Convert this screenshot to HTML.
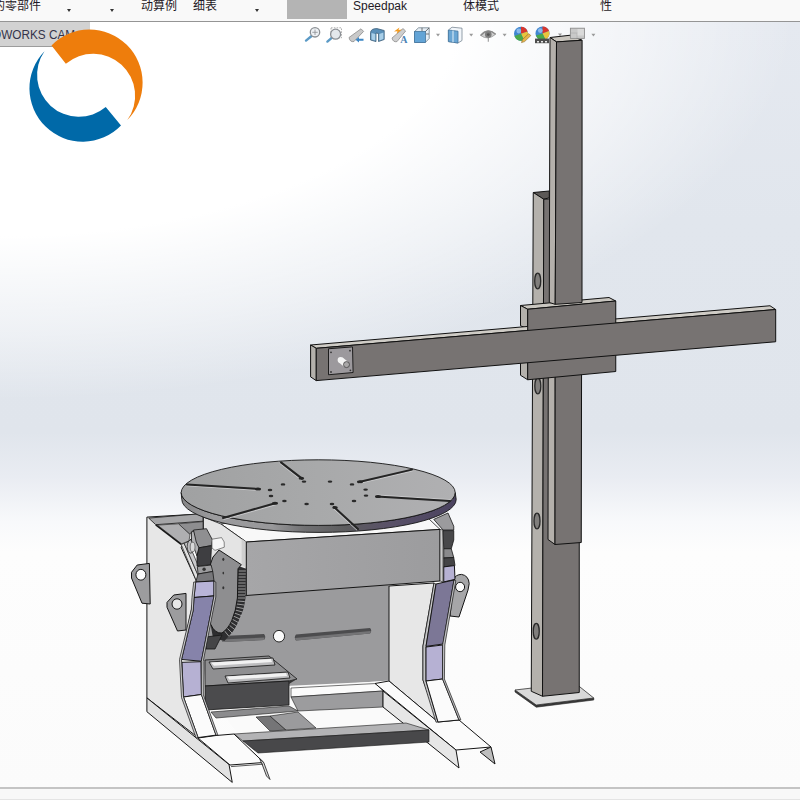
<!DOCTYPE html>
<html><head><meta charset="utf-8">
<style>
html,body{margin:0;padding:0;}
body{width:800px;height:800px;overflow:hidden;position:relative;background:#fff;font-family:"Liberation Sans","Noto Sans CJK SC",sans-serif;}
#vp{position:absolute;left:0;top:22px;width:800px;height:766px;
 background:
  radial-gradient(ellipse 820px 400px at 0px -10px, rgba(255,255,255,1) 0%, rgba(255,255,255,1) 56%, rgba(255,255,255,0.5) 78%, rgba(255,255,255,0) 97%),
  linear-gradient(180deg,#e5e9f0 0px,#e1e6ed 200px,#e0e5ec 410px,#e9ecf2 455px,#f8f9fb 500px,#fdfdfd 530px,#fbfbfb 766px);}
#top{position:absolute;left:0;top:0;width:800px;height:21px;background:#f9f9f9;border-bottom:1px solid #959595;overflow:hidden;}
#top span{position:absolute;top:-2.5px;font-size:12px;line-height:16px;color:#1f1a26;white-space:nowrap;}
#top i{position:absolute;top:8.5px;width:0;height:0;border-left:2.5px solid transparent;border-right:2.5px solid transparent;border-top:3px solid #333;}
#tab{position:absolute;left:0;top:22px;width:90px;height:24px;background:#d2d2d2;border-bottom:1px solid #9c9c9c;overflow:hidden;}
#tab span{position:absolute;left:-8px;top:3.5px;font-size:13.7px;line-height:18px;color:#34344a;white-space:nowrap;transform:scaleX(0.86);transform-origin:0 0;}
#bot{position:absolute;left:0;top:787px;width:800px;height:10px;background:#f8f8f8;border-top:2px solid #c4c4c4;border-bottom:1px solid #e4e4e4;}
svg{position:absolute;left:0;top:0;}
</style></head><body>
<div id="vp"></div>
<div id="top">
<span style="left:-7px">的零部件</span><i style="left:67px"></i><i style="left:110px"></i>
<span style="left:141px">动算例</span><span style="left:193px">细表</span><i style="left:255px"></i>
<div style="position:absolute;left:287px;top:0;width:60px;height:19px;background:#b4b4b4"></div>
<span style="left:353px;font-size:12px">Speedpak</span><span style="left:463px">体模式</span><span style="left:600px">性</span>
</div>
<div id="tab"><span>OWORKS CAM</span></div>
<div id="bot"></div>
<svg width="800" height="800" viewBox="0 0 800 800">
<!-- LOGO -->
<g id="logo">
<path d="M51.5 45.4 A53 53 0 0 1 127.3 120.1 A42 42 0 0 0 65.85 63.75 Z" fill="#ee7d0c"/>
<path d="M44.5 51.2 A53.3 53.3 0 0 0 121 125.5 L105.75 107 A41.8 41.8 0 0 1 44.5 51.2 Z" fill="#0069a8"/>
</g>
<!--ICONS-START-->
<g id="icons">
<!-- mag 1 -->
<line x1="311.6" y1="36" x2="306" y2="40.6" stroke="#5b9ac6" stroke-width="2.4" stroke-linecap="round"/>
<circle cx="315" cy="32.3" r="4.7" fill="#eef1f4" stroke="#8b8f94" stroke-width="1.3"/>
<path d="M315 29.6 V35 M312.3 32.3 H317.7" stroke="#8a8e92" stroke-width="0.8"/>
<!-- mag 2 -->
<rect x="331" y="27.8" width="10.5" height="10" fill="none" stroke="#9a9a9a" stroke-width="0.8" stroke-dasharray="1.6 1.2"/>
<line x1="332" y1="37.6" x2="327.4" y2="41.6" stroke="#5b9ac6" stroke-width="2.4" stroke-linecap="round"/>
<circle cx="335.6" cy="34.2" r="5" fill="#e4e8ec" stroke="#8b8f94" stroke-width="1.3"/>
<!-- previous view -->
<path d="M349 37.5 L361 28.8 L363.6 31.4 L354 41.5 Q350 42.5 349 37.5 Z" fill="#c9c9c9" stroke="#8d8d8d" stroke-width="0.8"/>
<path d="M355.5 39.8 L359 37 L359 38.8 L363.5 38.8 L363.5 40.8 L359 40.8 L359 42.6 Z" fill="#3d86c4"/>
<!-- section view -->
<path d="M370.5 32.5 Q371 28.5 377 28.6 L384.2 30.5 L384.2 39.5 L378.5 41.5 L378.5 33.5 L376 33 L376 41.6 L370.5 40 Z" fill="#5a8fb8" stroke="#3d5f7a" stroke-width="0.8"/>
<path d="M371.5 33 L375.3 34 L375.3 40.5 L371.5 39.5 Z M379.3 34 L383.4 32.5 L383.4 39 L379.3 40.4 Z" fill="#a9cfe8"/>
<!-- annotation -->
<path d="M392 38 L403 28.6 L405.6 31 L397 41.6 Q393 42.5 392 38 Z" fill="#cfcfcf" stroke="#8d8d8d" stroke-width="0.8"/>
<path d="M394 31.5 L399.5 27.5 L398.5 30 L402 29.5 L396.5 33.8 L397.5 31.3 Z" fill="#f39a1e"/>
<text x="400.2" y="42.8" font-family="Liberation Serif,serif" font-size="10" fill="#4a83b5" font-weight="bold">A</text>
<!-- view cube -->
<path d="M414.6 31.5 L418.5 27.8 L429.2 27.8 L429.2 38.5 L425.4 42.4 L414.6 42.4 Z" fill="#e6eef5" stroke="#6f7f8c" stroke-width="0.8"/>
<rect x="414.6" y="31.5" width="10.8" height="10.9" fill="#63a4d6" stroke="#41759f" stroke-width="0.8"/>
<path d="M425.4 31.5 L429.2 27.8 M422 27.8 V31 M429 34 H426" stroke="#555" stroke-width="0.8" fill="none"/>
<path d="M436 33.8 h4 l-2 2.6 z" fill="#9a9a9a"/>
<!-- display style -->
<path d="M448.4 30 L452 27.2 L462 28.2 L462 40.5 L458 43 L448.4 41.6 Z" fill="#f2f6fa" stroke="#7a8894" stroke-width="0.8"/>
<path d="M448.4 30 L458 31.2 L458 43 L448.4 41.6 Z" fill="#6aa6d4" stroke="#41759f" stroke-width="0.8"/>
<path d="M453 30.6 V42.3" stroke="#cfe4f4" stroke-width="1.2"/>
<path d="M469.2 33.8 h4 l-2 2.6 z" fill="#9a9a9a"/>
<!-- eye -->
<path d="M480.6 35.4 Q488 27 495.6 34.2 Q488 41 480.6 35.4 Z" fill="#cfcfcf" stroke="#a2a2a2" stroke-width="0.9"/>
<path d="M480.6 35.4 Q488 27 495.6 34.2" fill="none" stroke="#8c8c8c" stroke-width="1.5"/>
<circle cx="488.3" cy="34.6" r="3.3" fill="#7d7d7d"/><circle cx="488.3" cy="34.6" r="1.4" fill="#555"/>
<path d="M488.3 38 V41.8" stroke="#9a9a9a" stroke-width="1.1"/>
<path d="M502.6 33.8 h4 l-2 2.6 z" fill="#9a9a9a"/>
<!-- appearance ball -->
<circle cx="521" cy="33.8" r="7" fill="#3f86d0"/>
<path d="M521 33.8 L521 26.8 A7 7 0 0 1 527.6 31.5 Z" fill="#d8362c"/>
<path d="M521 33.8 L527.6 31.5 A7 7 0 0 1 524 40.1 Z" fill="#e9c43c"/>
<path d="M521 33.8 L524 40.1 A7 7 0 0 1 514.4 36 Z" fill="#4aa84a"/>
<circle cx="518.8" cy="31" r="2.4" fill="#9cc6f0" opacity="0.8"/>
<path d="M521.5 42.6 L522.5 39.5 L528.8 33.6 L530.8 35.6 L524.6 41.6 Z" fill="#e8b64a" stroke="#8a6a2a" stroke-width="0.6"/>
<!-- scene ball -->
<circle cx="542.5" cy="33.4" r="7" fill="#3f86d0"/>
<path d="M542.5 33.4 L542.5 26.4 A7 7 0 0 1 549.1 31.1 Z" fill="#d8362c"/>
<path d="M542.5 33.4 L549.1 31.1 A7 7 0 0 1 545.5 39.7 Z" fill="#e9c43c"/>
<path d="M542.5 33.4 L545.5 39.7 A7 7 0 0 1 535.9 35.6 Z" fill="#4aa84a"/>
<circle cx="540.3" cy="30.6" r="2.4" fill="#9cc6f0" opacity="0.8"/>
<rect x="535" y="38.6" width="14" height="4.6" fill="#4d4d4d"/>
<path d="M537 41 h2 v1.4 h-2z M541 41 h2 v1.4 h-2z M545 41 h2 v1.4 h-2z" fill="#e6e6e6"/>
<path d="M558 33.6 h4 l-2 2.6 z" fill="#9a9a9a"/>
<path d="M591.4 33.8 h4 l-2 2.6 z" fill="#9a9a9a"/>
</g>
<!--ICONS-END-->
<!--TOWER-START-->
<g id="tower" stroke="#111" stroke-width="1" stroke-linejoin="round">
<!-- base plate -->
<path d="M515 690 L536.25 705 L593.75 698 L593.75 700 L536.25 707.2 L515 692 Z" fill="#3a3a3a" stroke="#222" stroke-width="0.6"/>
<path d="M515 690 L575 683 L593.75 698 L536.25 705 Z" fill="#d9d9d9" stroke="#333" stroke-width="0.8"/>
<!-- lower column -->
<path d="M533.25 192.5 L549.3 191 L549.3 197.75 L543.75 199.25 Z" fill="#5c5957"/>
<path d="M533.25 192.5 L543.75 199.25 L542.5 696.25 L531.25 691.25 Z" fill="#b4b1ac"/>
<path d="M543.75 199.25 L579.25 197 L579.25 692.5 L542.5 696.25 Z" fill="#777372"/>
<g fill="#807e7c" stroke="#2a2a2a" stroke-width="1.3">
<ellipse cx="537.7" cy="281" rx="3" ry="7.8"/>
<ellipse cx="537.8" cy="386" rx="3" ry="7.8"/>
<ellipse cx="537" cy="521" rx="3" ry="7.8"/>
<ellipse cx="536.25" cy="631.25" rx="3" ry="7.8"/>
</g>
<!-- clamp upper: top & left -->
<path d="M520.5 305.5 L609 297.5 L615.75 301 L527.7 309.25 Z" fill="#c9c6c0"/>
<path d="M520.5 305.5 L527.7 309.25 L527.7 328.75 L520.5 325.75 Z" fill="#b4b1ac"/>
<!-- upper column -->
<path d="M548.3 350 L555.2 350 L555 544.5 L548 539.5 Z" fill="#b4b0ab"/>
<path d="M555.2 350 L581.6 350 L581.25 542.5 L555 544.5 Z" fill="#777372"/>
<path d="M550 37.5 L570 35.25 L582.1 40.25 L556.5 41.9 Z" fill="#cac6bf"/>
<path d="M550 37.5 L556.5 41.9 L555.2 304.3 L549.3 302.5 Z" fill="#b4b0ab"/>
<path d="M556.5 41.9 L582.1 40.25 L582 302.5 L555.2 304.3 Z" fill="#777372"/>
<!-- lower clamp -->
<path d="M520.5 360 L527.7 362 L527.7 379.75 L520.5 375.25 Z" fill="#b4b1ac"/>
<path d="M527.7 360 L615.75 352 L615.75 371.5 L527.7 379.75 Z" fill="#777372"/>
<!-- beam top -->
<path d="M310.6 345 L770 305.75 L775.7 309.5 L316.25 348.3 Z" fill="#cfccc6"/>
<!-- clamp upper front -->
<path d="M527.7 309.25 L615.75 301 L615.75 324 L527.7 331.5 Z" fill="#777372"/>
<!-- beam -->
<path d="M310.6 345 L316.25 348.3 L316.25 380.6 L310.6 376.9 Z" fill="#b4b1ac"/>
<path d="M316.25 348.3 L775.7 309.5 L775.7 341.75 L316.25 380.6 Z" fill="#777372"/>
<!-- plate & pin -->
<path d="M328.5 348.75 L352.5 346.9 L353.1 372.5 L328.5 374.75 Z" fill="#9c999d" stroke-width="0.9"/>
<g fill="#333" stroke="none"><circle cx="331" cy="352.3" r="0.9"/><circle cx="350" cy="350.7" r="0.9"/><circle cx="350.4" cy="370.3" r="0.9"/><circle cx="331" cy="372" r="0.9"/></g>
<path d="M338.6 362.2 L344.4 367 L348.6 362.2 L342.6 357.6 Z" fill="#f4f4f4" stroke="none"/>
<circle cx="340.6" cy="359.9" r="3" fill="#f4f4f4" stroke="none"/>
<circle cx="346.5" cy="364.6" r="3" fill="#a9a7a8" stroke="#444" stroke-width="0.8"/>
</g>
<!--TOWER-END-->
<!--POS-START-->
<defs>
<linearGradient id="gTop" x1="0" y1="0" x2="1" y2="0"><stop offset="0" stop-color="#a0a1a2"/><stop offset="0.5" stop-color="#a8a9aa"/><stop offset="1" stop-color="#b0b0b2"/></linearGradient>
<linearGradient id="gRim" x1="0" y1="0" x2="1" y2="0"><stop offset="0" stop-color="#858587"/><stop offset="0.12" stop-color="#9c9c9e"/><stop offset="0.33" stop-color="#98989a"/><stop offset="0.45" stop-color="#707072"/><stop offset="0.6" stop-color="#5c5c5e"/><stop offset="0.75" stop-color="#5a5268"/><stop offset="1" stop-color="#4b4360"/></linearGradient>
<linearGradient id="gBox" x1="0" y1="0" x2="1" y2="0"><stop offset="0" stop-color="#a6a6a8"/><stop offset="1" stop-color="#9c9c9e"/></linearGradient>
</defs>
<g id="pos" stroke="#151515" stroke-width="1" stroke-linejoin="round">
<!-- left side plate -->
<path d="M146.9 517.1 L203 513.8 L203 530 L181 547.1 L196.5 581.25 L194 597.5 L181 658.75 L183.5 697 L198.1 737.6 L146.9 697.9 Z" fill="#e7e7e7"/>
<path d="M148.7 518.1 L203 513.5 L203 521.2 L155.75 524.7 Z" fill="#a5a5a7" stroke-width="0.8"/>
<path d="M178.5 523.8 L203 521.6 L203 531 L192 531 L190 534.5 Z" fill="#8e8e90" stroke-width="0.6"/>
<path d="M157.5 525.1 L178.5 523.8 L190 534.5 L189 541 L181.5 543.8 Z" fill="#afafb1" stroke-width="0.6"/>
<path d="M155.75 524.9 L181.2 544.4" stroke-width="1.5" fill="none"/>
<path d="M181.1 544.4 L184.2 543.4 L198.8 577 L196.5 581.25 Z" fill="#e0e0e0" stroke-width="0.7"/>
<path d="M184.2 543.4 L188 541.6 L199.6 569 L198.8 577 Z" fill="#c9c9cb" stroke-width="0.7"/>
<!-- lugs left -->
<path d="M149.4 563.4 L137.2 565 L131.5 572.3 L131.5 578 L142 603.2 L150.2 604 Z M145.9 574.75 A5 5.4 0 1 0 135.9 574.75 A5 5.4 0 1 0 145.9 574.75 Z" fill="#9c9c9e" fill-rule="evenodd"/>
<path d="M186 593.4 L173.75 595 L167 602.4 L167 607.25 L177.5 631 L186 630 Z M182 604 A5 5.2 0 1 0 172 604 A5 5.2 0 1 0 182 604 Z" fill="#9c9c9e" fill-rule="evenodd"/>
<!-- left channel outer flange -->
<path d="M146.9 697.9 L229 764.5 L232.25 782.4 L146.9 711.7 Z" fill="#e2e2e2"/>
<!-- back panel -->
<path d="M200 590 L389 585 L389 680.5 L291 688 L205 690 Z" fill="#9b9b9d" stroke="none"/>
<!-- right side plate inner -->
<path d="M389 586 L434 583 L423 646 L423 680 L438 722 L389 681 Z" fill="#e7e7e7"/>
<!-- floor -->
<path d="M205 690 L389 681 L438 722 L243 741 Z" fill="#fafafa" stroke="none"/>
<path d="M291 688 L376 683.5 L383 691 L291 697 Z" fill="#fbfbfb" stroke-width="0.6"/>
<path d="M291 697 L383 691 L383 707 L298 711 Z" fill="#9c9c9e" stroke-width="0.6"/>
<path d="M211 712 L289 706 L298 711 L216 718 Z" fill="#8b8b8d" stroke-width="0.6"/>
<path d="M256 717 L270 716 L286 730 L270 731 Z" fill="#757577" stroke-width="0.6"/>
<path d="M270 716 L298 712 L316 728 L286 730 Z" fill="#9b9b9d" stroke-width="0.6"/>
<!-- right channel -->
<path d="M375 683.5 L389 681 L438 722 L459 720 L491 747 L456 750 Z" fill="#fbfbfb"/>
<path d="M383 691 L456 750 L459 768 L383 707 Z" fill="#e6e6e6"/>
<path d="M491 747 L495 764 L480 752 Z" fill="#bdbdbd"/>
<!-- front cross member -->
<path d="M234 734 L406 723 L429 730 L243 741 Z" fill="#b3b3b5" stroke-width="0.6"/>
<path d="M243 741 L429 730 L429 742 L258 753 Z" fill="#48484a" stroke-width="0.6"/>
<!-- left channel web -->
<path d="M198 738 L216 735.5 L234 734 L263.75 762.5 L230 765 Z" fill="#fbfbfb"/>
<path d="M259.5 758.4 L263.75 762.5 L270 779.5 L266.5 776 L262.4 765 Z" fill="#d9d9d9" stroke-width="0.8"/><path d="M231 766.6 L263 764.2" stroke-width="0.7" fill="none"/>
<!-- slots in back panel -->
<path d="M222 636 L264 634 Q266.5 637 264 640 L222 642 Z" fill="#4c4c4e" stroke="none"/>
<path d="M222 639.5 L264.5 637.5 L264 640 L222 642 Z" fill="#747476" stroke="none"/>
<path d="M296 634.6 L370 628 Q372.5 630.5 370 633.5 L296 640.5 Q293.5 637.5 296 634.6 Z" fill="#4c4c4e" stroke="none"/>
<path d="M295 638 L370.8 631 L370 633.5 L296 640.5 Z" fill="#747476" stroke="none"/>
<ellipse cx="279" cy="636.2" rx="5.6" ry="5.8" fill="#fafafa" stroke-width="0.9"/>
<!-- motor plate -->
<path d="M205 660 L269 656 L297 679 L289 681 L205 686 Z" fill="#8f8f91" stroke-width="0.8"/>
<path d="M209 662 L273 658 L275 665 L213 669 Z" fill="#bdbdbf" stroke-width="0.8"/>
<path d="M211 662.6 L271 659 L272 662 L214 665.8 Z" fill="#f2f2f2" stroke="none"/>
<path d="M225 676 L288 672 L290 678 L228 683 Z" fill="#bdbdbf" stroke-width="0.8"/>
<path d="M227 676.6 L286 673 L287 676 L229.5 679.8 Z" fill="#f2f2f2" stroke="none"/>
<path d="M205 686 L289 681 L289 705 L205 710 Z" fill="#4b4b4d" stroke-width="0.8"/>
<path d="M289 681 L297 679 L289 684 Z" fill="#333" stroke="none"/>
<!-- box -->
<path d="M221 524 L246.3 542 L440 529.4 L428 518 L300 512 Z" fill="#f8f8f8" stroke-width="0.8"/>
<path d="M203.5 517 L221 524 L246.3 542 L246.3 596 L236 590 L203.5 562 Z" fill="#e4e4e4" stroke-width="0.8"/>
<path d="M241.6 539 L246.3 542 L246.3 568 L241.6 565 Z" fill="#cfcfcf" stroke="none"/>
<path d="M246.3 542 L440 529.4 L440 581 L246.3 595.5 Z" fill="url(#gBox)"/>
<path d="M440 529.4 L443 530 L443 582 L440 581 Z" fill="#cacaca" stroke-width="0.6"/>
<!-- gear -->
<path d="M238.2 566 L246.3 568.75 L245.5 598 Q244 610 240.6 616 Q237 626 232.5 632 L224.4 641 L213 638 L210.5 624 Z" fill="#2e2e30" stroke="none"/>
<g stroke="#c8c8c8" stroke-width="0.7" fill="none"><path d="M238.5 571 h7.4 M238.4 574 h7.4 M238.3 577 h7.4 M238.2 580 h7.4 M238.1 583 h7.4 M238 586 h7.4 M238 589 h7.4 M237.9 592 h7.4 M237.8 595 h7.4 M237.6 598 h7.6 M237.2 601 l7.6 0.6 M236.7 604 l7.6 1 M236 607 l7.6 1.6 M235.3 610 l7.3 2 M234.4 613 l7 2.6 M233.3 616 l6.6 3 M232 619 l6.4 3.6 M230.5 622 l6 4 M229 625 l5.6 4.4 M227 628 l5 5 M224.6 631 l4.4 5.4"/></g>
<path d="M206 637 L222 635 L215 649 L206 649 Z" fill="#454547" stroke-width="0.8"/>
<path d="M213 557 L219 550 L241.4 564.7 L238 568.75 L237.4 598 Q236 611 231.7 620.75 Q228 629 222 633 Q215 634 210.5 624 L210.5 563.9 Z" fill="#8e8e90"/>
<g fill="#333" stroke="none"><ellipse cx="223.3" cy="559.3" rx="1" ry="1.6"/><ellipse cx="223.3" cy="573.1" rx="0.8" ry="1.3"/><ellipse cx="223.3" cy="587.75" rx="1" ry="1.6"/></g>
<!-- bearing block -->
<ellipse cx="190.6" cy="546.6" rx="3.4" ry="6.6" fill="#bdbdbf" stroke-width="0.7"/>
<path d="M191.5 532 L194 531 L199 548 L197 556 L191.5 541 Z" fill="#b2b2b4" stroke-width="0.8"/>
<path d="M193.5 530 L206.5 528.7 L212.5 540 L211.5 545.6 L199 547.8 L196.2 542 Z" fill="#8f8f91" stroke-width="0.8"/>
<path d="M199 547.8 L211.5 545.6 L210.5 565 L197 566 L197 556 Z" fill="#3e3e41" stroke-width="0.8"/>
<ellipse cx="192.6" cy="547" rx="2.4" ry="4.8" fill="#d9d9d9" stroke="#555" stroke-width="0.7"/>
<path d="M212 539.2 L221.6 537.6 Q225.4 541.5 224.3 547.2 L215 550.4 L212 548 Z" fill="#f6f6f6" stroke="#555" stroke-width="0.7"/>
<path d="M197.3 566.6 L211.1 565 L212.75 571.5 L198.1 574 Z" fill="#9c9c9e" stroke-width="0.8"/>
<circle cx="204.1" cy="569.2" r="1.7" fill="#333" stroke="none"/>
<path d="M198.1 574 L212.75 571.5 L214 581 L195.7 582 Z" fill="#77777a" stroke-width="0.8"/>
<!-- left leg -->
<path d="M195.7 582 L214 581 L214 595.9 L194 597.5 Z" fill="#b8b4d8"/>
<path d="M194 597.5 L214 595.9 L211 612 L201.4 661.2 L181.5 659.5 L193.25 610 Z" fill="#8683aa"/>
<path d="M181.9 662.3 L201 661.7 L201.4 694.5 L183.5 697 Z" fill="#b6b1d3"/>
<path d="M183.5 697 L201.4 694.5 L216 735.1 L198.1 737.6 Z" fill="#fbfbfb"/>
<path d="M214 581 L215.8 582 L215.8 597 L212.6 613 L203.2 661.5 L203.4 695 L218 735.5 L216 735.1 L201.4 694.5 L201.4 661.2 L211 612 L214 595.9 Z" fill="#cfcfd1" stroke-width="0.7"/>
<path d="M195.7 582 L194 597.5 L193.25 610 L181.5 659.5 L183.5 697 L198.1 737.6 L196.1 738 L181.5 697.5 L179.5 659.5 L191.25 610 L192 597.5 L193.7 582 Z" fill="#cfcfd1" stroke-width="0.7"/>
<!-- right lug -->
<path d="M454 579 Q455.5 574.6 461.5 574.4 Q468.6 575.5 469.2 583.6 L468 590 L459 617 L450 616 Z M464.6 587 A4.5 4.7 0 1 0 455.6 587 A4.5 4.7 0 1 0 464.6 587 Z" fill="#a6a6a8" fill-rule="evenodd"/>
<!-- right trunnion -->
<path d="M433.75 519.4 L448 513 L453.75 526.25 L453.75 530 L443 530 Z" fill="#9b9b9d" stroke-width="0.8"/>
<path d="M443 530.6 L453.75 530.6 L453.75 540 L451.25 548.75 L443.75 548.75 Z" fill="#48484a" stroke-width="0.8"/>
<path d="M443.75 548.75 L451.25 548.75 L453.75 557.5 L443.75 558 Z" fill="#8a8a8c" stroke-width="0.8"/>
<path d="M443.75 558 L453.75 557.5 L455 565.6 L443.75 566.9 Z" fill="#444446" stroke-width="0.8"/>
<!-- right leg -->
<path d="M434 583 L436 584 L426 646.4 L426 681 L438 722 L436 722.2 L423 680 L423 646 Z" fill="#c6c6c8" stroke-width="0.7"/>

<path d="M443.75 566.9 L454.4 565.6 L455 579.4 L443.75 581.9 Z" fill="#b6b1d3"/>
<path d="M436 584 L454 580 L443 644 L426 646.4 Z" fill="#7c7796"/>
<path d="M426 647 L442.6 645 L442.6 679 L426 681 Z" fill="#b6b1d3"/>
<path d="M426 681 L442.6 679 L459 720 L438 722 Z" fill="#fbfbfb"/>
<path d="M454 580 L455.8 580.6 L444.8 645 L444.4 679 L460.8 719.8 L459 720 L442.6 679 L442.6 645 Z" fill="#c6c6c8" stroke-width="0.7"/>
<!-- turntable -->
<path d="M181.2 492.6 A137 32.8 0 0 0 455.2 492.6 L456.2 499.4 A137.2 33 0 0 1 181.8 499.4 Z" fill="url(#gRim)" stroke-width="0.9"/>
<ellipse cx="318.2" cy="492.6" rx="137" ry="32.8" fill="url(#gTop)" stroke-width="0.9"/>
<g stroke="#c9c9cb" stroke-width="1" stroke-linecap="round" fill="none">
<path d="M187 485.8 L259 490.4"/><path d="M224 519.4 L277 504.4"/><path d="M280 463.6 L301 479.8"/>
<path d="M412.4 471 L359.4 483.4"/><path d="M450 499.6 L377 495"/><path d="M332.8 508 L356.8 530"/>
</g>
<g stroke="#242424" stroke-width="2" stroke-linecap="round" fill="none">
<path d="M187 484.4 L259 489"/><path d="M223 518 L276 503"/><path d="M281 462.4 L302 478.6"/>
<path d="M412 469.6 L359 482"/><path d="M450 501 L377 496.4"/><path d="M334 507 L358 529"/>
</g>
<g fill="#242424" stroke="none">
<ellipse cx="258" cy="489" rx="3" ry="1.5"/><ellipse cx="275" cy="503.2" rx="3" ry="1.5"/><ellipse cx="301.4" cy="478.2" rx="2.8" ry="1.5"/>
<ellipse cx="360" cy="481.8" rx="3" ry="1.5"/><ellipse cx="378" cy="496.4" rx="3" ry="1.5"/><ellipse cx="335" cy="507.4" rx="2.8" ry="1.5"/>
</g>
<g fill="#2a2a2a" stroke="none">
<ellipse cx="270" cy="490" rx="2.3" ry="1.2"/><ellipse cx="271" cy="496" rx="2.3" ry="1.2"/><ellipse cx="283" cy="484.4" rx="2.3" ry="1.2"/><ellipse cx="284.4" cy="501" rx="2.3" ry="1.2"/><ellipse cx="304" cy="481.6" rx="2.3" ry="1.2"/><ellipse cx="306.6" cy="504" rx="2.3" ry="1.2"/>
<ellipse cx="330" cy="481.6" rx="2.3" ry="1.2"/><ellipse cx="352" cy="484.4" rx="2.3" ry="1.2"/><ellipse cx="365.6" cy="489.6" rx="2.3" ry="1.2"/><ellipse cx="366" cy="495.6" rx="2.3" ry="1.2"/><ellipse cx="354" cy="501" rx="2.3" ry="1.2"/><ellipse cx="332" cy="504" rx="2.3" ry="1.2"/>
</g>
</g>
<!--POS-END-->
<!--ICONTOP-START-->
<g id="icontop">
<rect x="570.4" y="28.2" width="14" height="10.2" fill="#c9c9c9" stroke="#8e8e8e" stroke-width="0.9"/>
<path d="M571 33 h6 v5 M577 33 L584 30.5" stroke="#b2b2b2" stroke-width="0.8" fill="none"/>
<rect x="577.5" y="29" width="6.4" height="6.5" fill="#dadada"/>
</g>
<!--ICONTOP-END-->
<!--MODEL-->
</svg>
</body></html>
